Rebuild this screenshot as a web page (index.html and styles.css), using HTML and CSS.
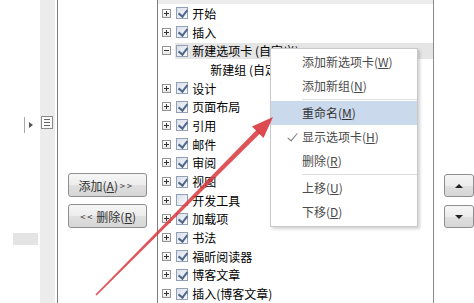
FILE: index.html
```html
<!DOCTYPE html>
<html lang="zh-CN">

<head>
  <meta charset="UTF-8">
  <meta name="viewport" content="width=device-width, initial-scale=1.0">
  <title>自定义功能区</title>
  <link rel="stylesheet" href="styles.css">
</head>

<body>
  <div class="window">
    <!-- 左侧命令列表的边缘 -->
    <div class="pane-left">
      <div class="left-blank">
        <div class="marker"><span class="tri"></span></div>
        <div class="gray-block"></div>
      </div>
      <div class="left-strip">
        <div class="list-icon"><i></i><i></i><i></i></div>
      </div>
    </div>

    <!-- 添加 / 删除 按钮 -->
    <div class="pane-mid">
      <button class="btn">添加(<u>A</u>) <span class="chev">&gt;&gt;</span></button>
      <button class="btn"><span class="chev">&lt;&lt;</span> 删除(<u>R</u>)</button>
    </div>

    <!-- 主选项卡树 -->
    <div class="pane-tree">
      <div class="tree-top"></div>
      <div class="row"><span class="exp"></span><span class="label"><span class="cb on"></span>开始</span></div>
      <div class="row"><span class="exp"></span><span class="label"><span class="cb on"></span>插入</span></div>
      <div class="row"><span class="exp open"></span><span class="label selected"><span class="cb on"></span>新建选项卡 (自定义)</span></div>
      <div class="row sub">新建组 (自定义)</div>
      <div class="row"><span class="exp"></span><span class="label"><span class="cb on"></span>设计</span></div>
      <div class="row"><span class="exp"></span><span class="label"><span class="cb on"></span>页面布局</span></div>
      <div class="row"><span class="exp"></span><span class="label"><span class="cb on"></span>引用</span></div>
      <div class="row"><span class="exp"></span><span class="label"><span class="cb on"></span>邮件</span></div>
      <div class="row"><span class="exp"></span><span class="label"><span class="cb on"></span>审阅</span></div>
      <div class="row"><span class="exp"></span><span class="label"><span class="cb on"></span>视图</span></div>
      <div class="row"><span class="exp"></span><span class="label"><span class="cb"></span>开发工具</span></div>
      <div class="row"><span class="exp"></span><span class="label"><span class="cb on"></span>加载项</span></div>
      <div class="row"><span class="exp"></span><span class="label"><span class="cb on"></span>书法</span></div>
      <div class="row"><span class="exp"></span><span class="label"><span class="cb on"></span>福昕阅读器</span></div>
      <div class="row"><span class="exp"></span><span class="label"><span class="cb on"></span>博客文章</span></div>
      <div class="row"><span class="exp"></span><span class="label"><span class="cb on"></span>插入(博客文章)</span></div>
    </div>

    <!-- 上移 / 下移 -->
    <div class="pane-right">
      <button class="btn small"><span class="up"></span></button>
      <button class="btn small"><span class="down"></span></button>
    </div>
  </div>

  <!-- 右键菜单 -->
  <div class="menu">
    <div class="menu-item">添加新选项卡(<u>W</u>)</div>
    <div class="menu-item">添加新组(<u>N</u>)</div>
    <div class="menu-sep"></div>
    <div class="menu-item active">重命名(<u>M</u>)</div>
    <div class="menu-item checked">显示选项卡(<u>H</u>)</div>
    <div class="menu-item">删除(<u>R</u>)</div>
    <div class="menu-sep"></div>
    <div class="menu-item">上移(<u>U</u>)</div>
    <div class="menu-item">下移(<u>D</u>)</div>
  </div>

  <!-- 红色箭头标注 -->
  <svg class="arrow" width="474" height="303" viewBox="0 0 474 303">
    <polygon points="95.4,294.4 96.6,295.6 260.8,132.8 257.2,129.2" fill="#d9363c" opacity="0.85" />
    <polygon points="273,117 252,126.5 263.5,138" fill="#d9363c" opacity="0.9" />
  </svg>
</body>

</html>
```

FILE: styles.css
```css
* {
  padding: 0;
  margin: 0;
  box-sizing: border-box;
}

body {
  width: 474px;
  height: 303px;
  overflow: hidden;
  background-color: #fff;
  font-family: "Noto Sans CJK SC", "Noto Sans", sans-serif;
  font-size: 12px;
  color: #222;
  position: relative;
}

.window {
  display: flex;
  height: 303px;
}

/* 左侧 */
.pane-left {
  width: 58px;
  display: flex;
  border-right: 1px solid #7d7d7d;
}

.left-blank {
  width: 40px;
  padding-top: 117px;
  display: flex;
  flex-direction: column;
}

.marker {
  margin-left: 24px;
  width: 10px;
  height: 16px;
  border-left: 1px solid #a8a8a8;
  display: flex;
  align-items: center;
  padding-left: 4px;
}

.tri {
  width: 0;
  height: 0;
  border-top: 3px solid transparent;
  border-bottom: 3px solid transparent;
  border-left: 4px solid #555;
}

.gray-block {
  margin-top: 100px;
  margin-left: 13px;
  width: 25px;
  height: 12px;
  background-color: #e4e4e4;
}

.left-strip {
  width: 15px;
  background-color: #ececec;
  padding-top: 116px;
  padding-left: 1px;
}

.list-icon {
  width: 12px;
  height: 13px;
  border: 1px solid #8a8a8a;
  background-color: #fafafa;
  display: flex;
  flex-direction: column;
  justify-content: center;
  gap: 2px;
  padding: 0 2px;
}

.list-icon i {
  display: block;
  height: 1px;
  background-color: #666;
}

/* 中间按钮 */
.pane-mid {
  width: 101px;
  border-right: 1px solid #7d7d7d;
  padding: 173px 0 0 10px;
  display: flex;
  flex-direction: column;
  gap: 7px;
}

.btn {
  width: 79px;
  height: 24px;
  border: 1px solid #8e8e8e;
  border-radius: 3px;
  background: linear-gradient(#f6f6f6 0%, #ececec 50%, #e0e0e0 51%, #d6d6d6 100%);
  font-family: "Noto Sans CJK SC", "Noto Sans", sans-serif;
  font-size: 12px;
  color: #333;
  display: flex;
  align-items: center;
  justify-content: center;
}

.btn .chev {
  font-size: 9px;
  letter-spacing: 2px;
  margin: 0 2px;
}

/* 选项卡树 */
.pane-tree {
  width: 277px;
  border-right: 1px solid #8a8a8a;
}

.tree-top {
  height: 4px;
  background-color: #ececec;
}

.row {
  height: 18.7px;
  display: flex;
  align-items: center;
  padding-left: 4px;
  white-space: nowrap;
  color: #000;
}

.row.sub {
  padding-left: 52px;
}

.exp {
  width: 9px;
  height: 9px;
  border: 1px solid #959595;
  background: linear-gradient(#fff, #e8e8e8);
  position: relative;
  flex-shrink: 0;
}

.exp::before,
.exp::after {
  content: "";
  position: absolute;
  background-color: #333;
}

.exp::before {
  left: 1px;
  top: 3px;
  width: 5px;
  height: 1px;
}

.exp::after {
  left: 3px;
  top: 1px;
  width: 1px;
  height: 5px;
}

.exp.open::after {
  display: none;
}

.label {
  flex: 1;
  height: 16px;
  margin-left: 4px;
  display: flex;
  align-items: center;
}

.label.selected {
  background-color: #e5e5e5;
}

.cb {
  width: 12px;
  height: 12px;
  margin: 0 4px 0 1px;
  border: 1px solid #92a0b6;
  background: linear-gradient(135deg, #d9e0ea, #fafbfd);
  position: relative;
  flex-shrink: 0;
}

.cb.on::after {
  content: "";
  position: absolute;
  left: 3px;
  top: 0;
  width: 4px;
  height: 7px;
  border-right: 2px solid #52678c;
  border-bottom: 2px solid #52678c;
  transform: rotate(38deg);
}

/* 右侧按钮 */
.pane-right {
  flex: 1;
  padding: 174px 0 0 10px;
  display: flex;
  flex-direction: column;
  gap: 8px;
}

.btn.small {
  width: 30px;
  height: 23px;
  justify-content: flex-start;
  padding-left: 10px;
}

.up,
.down {
  width: 0;
  height: 0;
  border-left: 4px solid transparent;
  border-right: 4px solid transparent;
}

.up {
  border-bottom: 4px solid #222;
}

.down {
  border-top: 4px solid #222;
}

/* 右键菜单 */
.menu {
  position: absolute;
  left: 270px;
  top: 48px;
  width: 148px;
  padding: 1px 0 2px;
  background-color: #fff;
  border: 1px solid #c9c9c9;
  box-shadow: 2px 2px 3px rgba(0, 0, 0, 0.18);
}

.menu-item {
  height: 24px;
  line-height: 24px;
  padding-left: 31px;
  color: #4a4a4a;
  position: relative;
}

.menu-item.active {
  background-color: #cbd9ed;
  color: #333;
}

.menu-item.checked::before {
  content: "";
  position: absolute;
  left: 19px;
  top: 6px;
  width: 4px;
  height: 9px;
  border-right: 1px solid #777;
  border-bottom: 1px solid #777;
  transform: rotate(40deg);
}

.menu-sep {
  height: 1px;
  margin: 1px 0 1px 31px;
  background-color: #dedede;
}

.arrow {
  position: absolute;
  left: 0;
  top: 0;
  pointer-events: none;
}
```
